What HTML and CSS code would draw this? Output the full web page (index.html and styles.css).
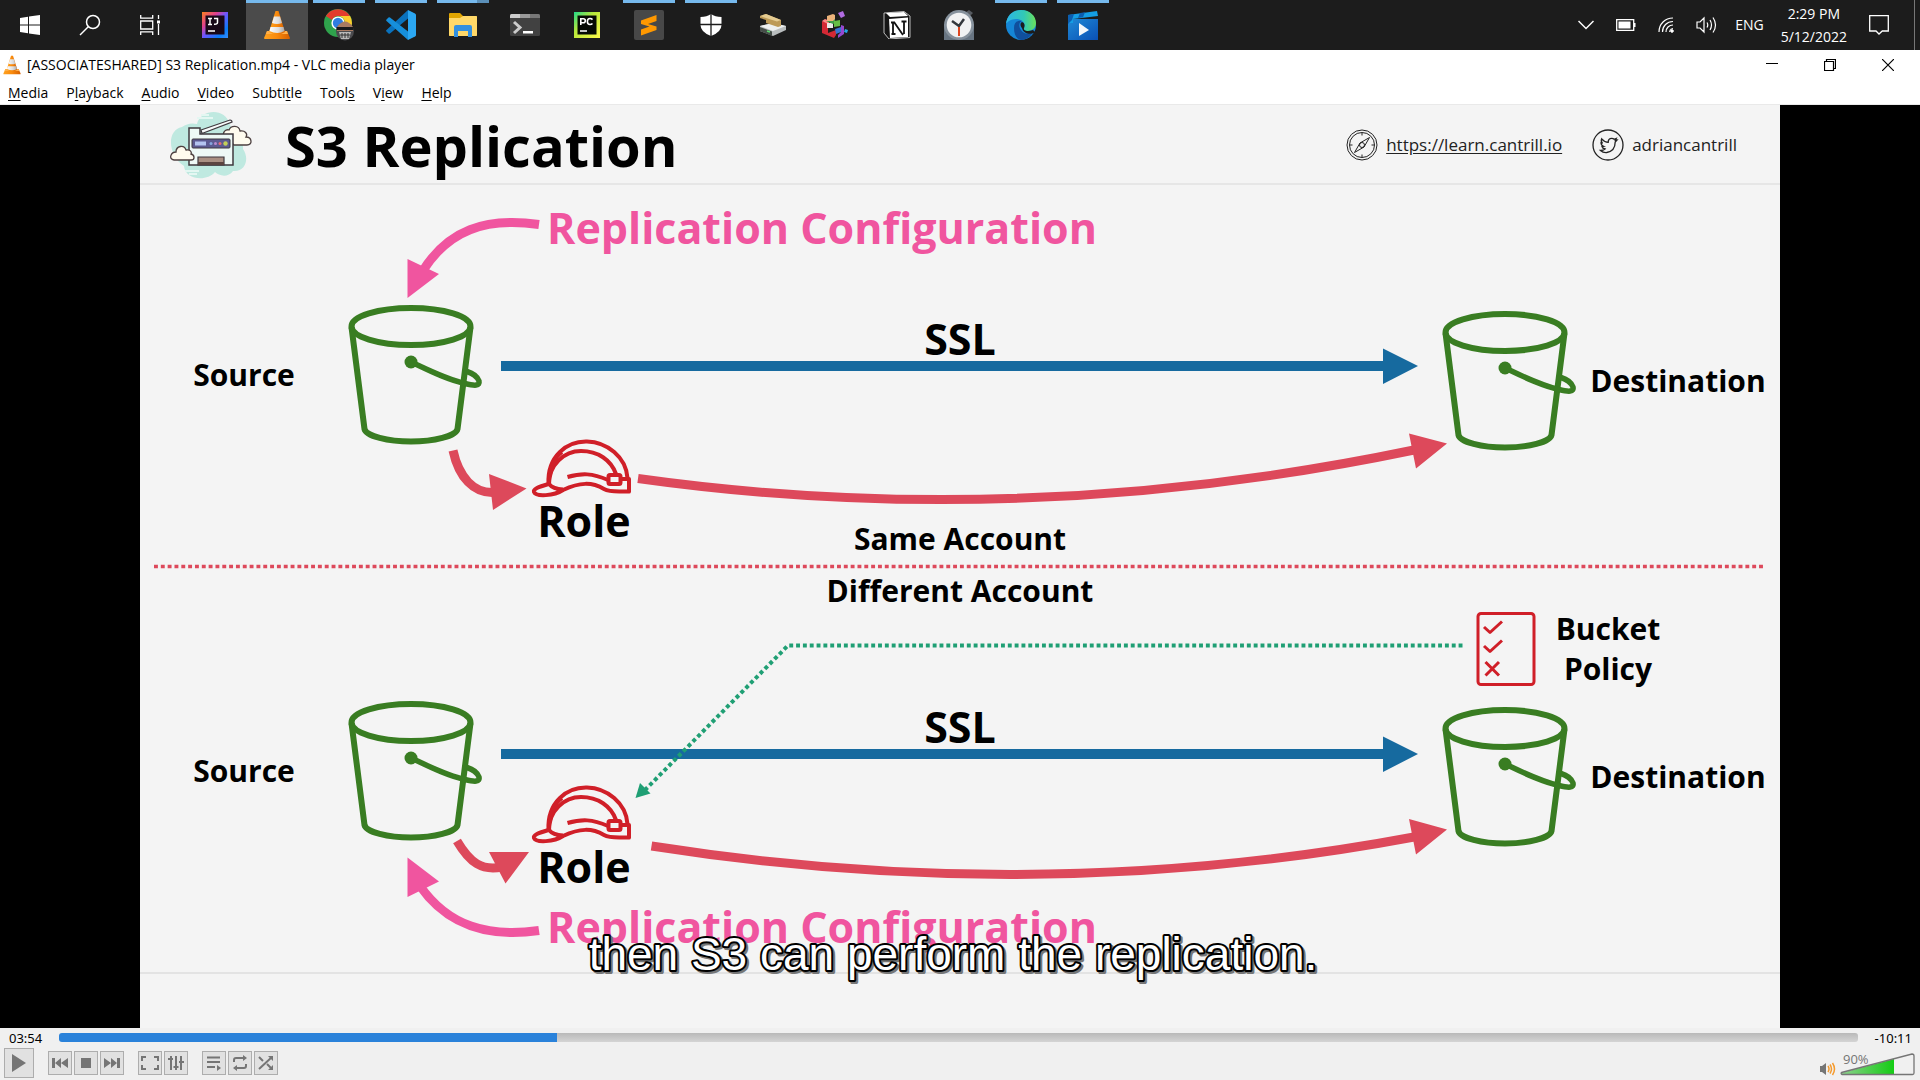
FILE: index.html
```html
<!DOCTYPE html>
<html lang="en">
<head>
<meta charset="utf-8">
<title>[ASSOCIATESHARED] S3 Replication.mp4 - VLC media player</title>
<link rel="stylesheet" href="styles.css">
</head>
<body>
<svg class="defs" aria-hidden="true">
  <defs>
    <linearGradient id="coneFill" x1="0" x2="1"><stop offset="0" stop-color="#ffa21f"/><stop offset=".5" stop-color="#f98a0c"/><stop offset="1" stop-color="#d65f00"/></linearGradient>
    <linearGradient id="coneStripe" x1="0" x2="1"><stop offset="0" stop-color="#fff"/><stop offset=".6" stop-color="#dcdcdc"/><stop offset="1" stop-color="#a9a9a9"/></linearGradient>
    <linearGradient id="ijFill" x1="0" x2="1" y1="0" y2="1"><stop offset="0" stop-color="#fc801d"/><stop offset=".3" stop-color="#e0408f"/><stop offset=".5" stop-color="#6b57ff"/><stop offset=".8" stop-color="#087cfa"/><stop offset="1" stop-color="#3a8df5"/></linearGradient>
    <linearGradient id="pcFill" x1="0" x2="1" y1="0" y2="1"><stop offset="0" stop-color="#21d789"/><stop offset=".4" stop-color="#b8e83a"/><stop offset="1" stop-color="#fcf84a"/></linearGradient>
    <linearGradient id="edgeTop" x1="0" x2="1"><stop offset="0" stop-color="#2bb5e8"/><stop offset=".6" stop-color="#32c9b5"/><stop offset="1" stop-color="#6be05a"/></linearGradient>
    <linearGradient id="movieFill" x1="0" x2="1" y1="0" y2="1"><stop offset="0" stop-color="#1f8ad6"/><stop offset="1" stop-color="#0a4fb4"/></linearGradient>
    <linearGradient id="volFill" x1="0" x2="1"><stop offset="0" stop-color="#8fd08f"/><stop offset="1" stop-color="#14cc14"/></linearGradient>
    <symbol id="cone" viewBox="0 0 26 30">
      <path d="M3 21h20l3 7q0 1-1 1H1q-1 0-1-1z" fill="url(#coneFill)"/>
      <path d="M3 21h20l1 3H2z" fill="#ffb04a"/>
      <path d="M11.500 1h3L21 22q-8 5-16 0z" fill="url(#coneFill)"/>
      <path d="M10 6.500h6l2 6.500q-5 2-10 0zM6.500 17h13l1 4q-7 4-15 0z" fill="url(#coneStripe)"/>
    </symbol>
    <symbol id="bucket" viewBox="345 300 142 150">
      <g fill="none" stroke="#397d22" stroke-width="6" stroke-linejoin="round">
        <ellipse cx="411" cy="326.500" rx="59.500" ry="18.500"/>
        <path d="M351.500 327L364.500 429C366 436 388 441.500 411 441.500S456 436 457.500 429L470.500 327"/>
        <path d="M411 362C430 371 448 380 465 383.500C475 386 480 386 479 381C477 376 472 373 467 371.500" stroke-width="5.500"/>
      </g>
      <circle cx="411" cy="362" r="6.500" fill="#397d22"/>
    </symbol>
    <symbol id="helmet" viewBox="530 436 104 64">
      <g fill="none" stroke="#d01f28" stroke-width="4" stroke-linejoin="round">
        <path d="M548.500 484C547 456 567 441 587 441.500S626 457 627.500 478"/>
        <path d="M549 484C549 465 564 451 581 451S611 460 616 474"/>
        <path d="M549 480C551 464 556 456 562 452"/>
        <path d="M548.500 484C538 487 533 489 534 492C536 497 554 496 563 490C580 482 592 482 604 489C611 493 622 491 629 491.500V479H621M549 484Q553 489 563 489.500"/>
        <path d="M567.500 477C582 473 592 473 608 480"/>
        <rect x="608.500" y="475" width="12" height="9" rx="1.500"/>
      </g>
    </symbol>
  </defs>
</svg>

<header class="taskbar">
  <nav class="system-buttons" aria-label="System">
    <button class="task-button system" aria-label="Start"><svg width="20" height="20" viewBox="0 0 20 20" fill="#fff"><path d="M0 3l8-1.200v7.700H0zM9 1.600L20 0v9.500H9zM0 10.500h8v7.700L0 17zM9 10.500h11V20L9 18.400z"/></svg></button>
    <button class="task-button system" aria-label="Search"><svg width="22" height="22" viewBox="0 0 22 22" fill="none" stroke="#fff" stroke-width="1.500"><circle cx="14" cy="8" r="6.500"/><path d="M9.500 12.500L1 21"/></svg></button>
    <button class="task-button system" aria-label="Task view"><svg width="20" height="20" viewBox="0 0 20 20" fill="none" stroke="#fff" stroke-width="1.300"><path d="M.7 0v3.200h12V0M.7 20v-3.200h12V20M.7 6h12v8H.7zM18.500 0v4M18.500 9v11"/><path d="M17 5.500h3v3h-3z" fill="#fff" stroke="none"/></svg></button>
  </nav>
  <nav class="apps" aria-label="Applications">
    <button class="task-button" aria-label="IntelliJ IDEA"><svg width="26" height="26" viewBox="0 0 26 26"><path d="M0 0h26v26H0z" fill="url(#ijFill)"/><path d="M3.500 3.500h19v19h-19z" fill="#180818"/><path d="M6 6.500h4M8 6.500v6M6 12.500h4M12 6.500h3.500v4q0 2-3.500 1.700M6 19h7" stroke="#fff" stroke-width="1.500" fill="none"/></svg></button>
    <button class="task-button active" aria-label="VLC media player"><svg width="26" height="30"><use href="#cone"/></svg></button>
    <button class="task-button running" aria-label="Google Chrome"><svg width="30" height="32" viewBox="0 0 30 32"><circle cx="14" cy="14" r="14" fill="#2fa24c"/><path d="M1.900 7A14 14 0 0 1 26 7H14a7 7 0 0 0-6 4z" fill="#e33b2e"/><path d="M26.100 7A14 14 0 0 1 14 28l6-10.500A7 7 0 0 0 14 7z" fill="#fccb2b"/><circle cx="14" cy="14" r="6.600" fill="#fff"/><circle cx="14" cy="14" r="5.200" fill="#2f7de1"/><circle cx="21" cy="22.500" r="9" fill="#4b4b4e"/><path d="M13 18q8-11 16 0v4H13z" fill="#a97b62"/><path d="M12.500 18h17v3h-17z" fill="#1a1a1c"/><path d="M15 23h12l-2 7h-8z" fill="#b9b9b9"/><path d="M16 26h10M18 24v5M21 24v5M24 24v5" stroke="#333" fill="none"/></svg></button>
    <button class="task-button running" aria-label="Visual Studio Code"><svg width="30" height="30" viewBox="0 0 30 30"><path d="M22 0l7 3.500q1 .5 1 1.500v20q0 1-1 1.500L22 30z" fill="#2ba7f2"/><path d="M22 0v8.500L4 23.500q-1 .5-1.500 0l-2-2q-.8-.8 0-1.500z" fill="#0a72bd"/><path d="M22 30v-8.500L4 7.500q-1-.5-1.500 0l-2 2q-.8.800 0 1.500z" fill="#168fdb"/></svg></button>
    <button class="task-button running grouped" aria-label="File Explorer"><svg width="28" height="24" viewBox="0 0 28 24"><path d="M0 1q0-1 1-1h10l3 3h13q1 0 1 1v18q0 1-1 1H1q-1 0-1-1z" fill="#e0a500"/><path d="M0 5h11l3-2h13q1 0 1 1v18q0 1-1 1H1q-1 0-1-1z" fill="#ffd869"/><path d="M5 24V14q0-2 2-2h14q2 0 2 2v10h-4v-6H9v6z" fill="#3390df"/></svg></button>
    <button class="task-button" aria-label="Terminal"><svg width="30" height="22" viewBox="0 0 30 22"><rect width="30" height="22" rx="1.500" fill="#414141"/><path d="M0 4V1.500Q0 0 1.500 0H10v4z" fill="#ccc"/><path d="M10 0h10v4H10z" fill="#999"/><path d="M20 0h8.500Q30 0 30 1.500V4H20z" fill="#777"/><path d="M4 8l6 5.500L4 19" stroke="#ccc" stroke-width="3" fill="none"/><path d="M13 17h10v2.500H13z" fill="#fff"/></svg></button>
    <button class="task-button" aria-label="PyCharm"><svg width="26" height="26" viewBox="0 0 26 26"><path d="M0 0h26v26H0z" fill="url(#pcFill)"/><path d="M3.500 3.500h19v19h-19z" fill="#050a04"/><path d="M6.800 13V6.700h2.500q2 0 2 2t-2 2H7M18.500 7.600q-1-1.100-2.500-1.100-2.600 0-2.600 3t2.600 3q1.500 0 2.500-1M6 19h7" stroke="#fff" stroke-width="1.600" fill="none"/></svg></button>
    <button class="task-button running" aria-label="Sublime Text"><svg width="30" height="30" viewBox="0 0 30 30"><rect width="30" height="30" rx="2" fill="#484848"/><path d="M7 10.500L22.500 5v6L14 14l8.500 2.500V20L7 25.500v-6l8.500-3L7 14z" fill="#ff9800"/></svg></button>
    <button class="task-button running" aria-label="Windows Security"><svg width="22" height="22" viewBox="0 0 22 22"><path d="M11 0q4 3 10.500 3v8q0 7-10.500 11Q.5 18 .5 11V3Q7 3 11 0z" fill="#fff"/><path d="M11 0v22M0 10.500h22" stroke="#1c1c1c" stroke-width="1.300"/></svg></button>
    <button class="task-button" aria-label="Compression utility"><svg width="28" height="22" viewBox="0 0 28 22"><path d="M1 12l13-3 13 3v4l-13 6-13-5z" fill="#b9bdbe"/><path d="M1 12l13-3 13 3-13 5z" fill="#eef0f0"/><path d="M1 13l12 4.500V22L1 17z" fill="#454d48"/><path d="M8 17l3 1" stroke="#5fdc72" stroke-width="1.500"/><path d="M1 2l6-2 15 6v6l-3 1-12-4V6L1 4z" fill="#bd9a57"/><path d="M1 2l6-2 15 6-4 1.500z" fill="#e4cb91"/></svg></button>
    <button class="task-button" aria-label="Registry tool"><svg width="28" height="28" viewBox="0 0 28 28"><path d="M1 10l6 2v10l8-3v5l-2 3L1 22z" fill="#d32935"/><path d="M1 10l3-2 5 2-2 3z" fill="#ff8585"/><path d="M6 5l6-2 2 1v6H6z" fill="#edb37a"/><path d="M6 12h6v5H6z" fill="#e9e9e9"/><path d="M5 10h7l2-2v4l-2 1z" fill="#3f9f48"/><path d="M13 10l6-1v6l-6 1z" fill="#66bd46"/><path d="M17 2l5-2 2 5-4 2z" fill="#b16be2"/><path d="M14 18l6-2v5l-5 2z" fill="#3775d4"/><path d="M20 14l3 1v8l-6 4v-3l3-3z" fill="#9548cf"/><path d="M24 18l3 1-1 3-3-1z" fill="#25a5e8"/></svg></button>
    <button class="task-button" aria-label="Notion"><svg width="28" height="28" viewBox="0 0 28 28"><path d="M1 2l20-1.500L27 5v21.500L6 28l-5-6z" fill="#151515" stroke="#bcbcbc"/><path d="M3 2l18-1 4 4L7 6z" fill="#fff"/><path d="M6 8l19-1.500V26L7 27z" fill="#fff"/><path d="M10 12v11M21 10v13M11 11l9 13M8 11.500h4M18.500 10.500h5M8.500 23h4" stroke="#111" stroke-width="1.800" fill="none"/></svg></button>
    <button class="task-button" aria-label="Alarms and clock"><svg width="30" height="30" viewBox="0 0 30 30"><path d="M0 14h30v16H0z" fill="#687582"/><path d="M22 2l3-2 4 3-3 3z" fill="#565a60"/><circle cx="15" cy="15" r="15" fill="#87929d"/><circle cx="15" cy="15" r="12.300" fill="#f1f2f3"/><path d="M8 11l7 5 5-7" stroke="#34383d" stroke-width="2.500" fill="none"/><path d="M15 17v9" stroke="#df461f" stroke-width="2"/></svg></button>
    <button class="task-button running" aria-label="Microsoft Edge"><svg width="30" height="30" viewBox="0 0 30 30"><circle cx="15" cy="15" r="15" fill="#1586d6"/><path d="M0 14C1 5 7 0 15 0c9 0 15 6 15 13 0 6-5 8-9 8-3 0-4-1-3-3 2-5-2-9-8-9C5 9 1 12 0 14z" fill="url(#edgeTop)"/><path d="M8 18c0-6 4-8 8-7-4 2-3 6-1 9 3 5 9 4 12 2-3 6-8 8-12 8-5-1-7-6-7-12z" fill="#104f9d"/><path d="M16 12c3 1 3 4 2 6-1 3 4 4 9 2l3 3h-2c-5 2-11 0-12-5-2-2-2-5 0-6z" fill="#1c1c1c"/></svg></button>
    <button class="task-button running" aria-label="Movies and TV"><svg width="30" height="30" viewBox="0 0 30 30"><path d="M0 9h30v21H0z" fill="url(#movieFill)"/><path d="M0 5l29-4 1 5L5 9v4H0z" fill="#149ee4"/><path d="M0 5l6-1-2 6-4 4zM12 3l5-.7-2 5-5 .7z" fill="#0b5eb0"/><path d="M11 13l10 7-10 6z" fill="#f4f7fa"/></svg></button>
  </nav>
  <div class="tray">
    <button class="tray-button" aria-label="Show hidden icons"><svg width="16" height="10" viewBox="0 0 16 10" fill="none" stroke="#fff" stroke-width="1.500"><path d="M.5 1L8 8.500 15.500 1"/></svg></button>
    <button class="tray-button" aria-label="Battery"><svg width="20" height="12" viewBox="0 0 20 12"><path d="M.7.7h17v10.600H.7z" fill="none" stroke="#fff" stroke-width="1.300"/><path d="M2.500 2.500h12v7h-12zM18 4h1.500v4H18z" fill="#fff"/></svg></button>
    <button class="tray-button" aria-label="Wireless network"><svg width="16" height="16" viewBox="0 0 16 16" fill="none" stroke="#fff"><path d="M1 15C1 7 7 1 15 1M4.500 15C4.500 9 9 4.500 15 4.500M8 15c0-4 3-7 7-7" stroke-width="1.200"/><path d="M11.500 15q0-3.500 3.500-3.500" /><circle cx="14" cy="14" r="1.300" fill="#fff"/></svg></button>
    <button class="tray-button" aria-label="Volume"><svg width="22" height="18" viewBox="0 0 22 18" fill="none" stroke="#fff" stroke-width="1.200"><path d="M1 6h3l4-4v14l-4-4H1zM11 6.500q1.500 2.500 0 5M14 4q3 5 0 10M17 1.500q5 7.500 0 15"/></svg></button>
    <button class="tray-button language" aria-label="Input language">ENG</button>
    <button class="tray-button clock"><time>2:29 PM</time><time>5/12/2022</time></button>
    <button class="tray-button" aria-label="Notifications"><svg width="20" height="20" viewBox="0 0 20 20" fill="none" stroke="#fff" stroke-width="1.300"><path d="M.7.700h18.600v15.300h-6L10 19l-3-3H.7z"/></svg></button>
    <button class="show-desktop" aria-label="Show desktop"></button>
  </div>
</header>

<div class="titlebar">
  <svg class="title-icon" width="18" height="20"><use href="#cone"/></svg>
  <h1 class="window-title">[ASSOCIATESHARED] S3 Replication.mp4 - VLC media player</h1>
  <div class="window-controls">
    <button aria-label="Minimize"><svg width="12" height="12" viewBox="0 0 12 12" stroke="#000"><path d="M0 4.500h12"/></svg></button>
    <button aria-label="Restore"><svg width="12" height="12" viewBox="0 0 12 12" fill="none" stroke="#000" stroke-width="1.200"><path d="M.5 2.500h9v9h-9zM2.500 2V.500h9v9H10"/></svg></button>
    <button aria-label="Close"><svg width="12" height="12" viewBox="0 0 12 12" stroke="#000" stroke-width="1.200"><path d="M0 0l12 12M12 0L0 12"/></svg></button>
  </div>
</div>
<nav class="menubar" aria-label="Menu">
  <button><u>M</u>edia</button>
  <button>P<u>l</u>ayback</button>
  <button><u>A</u>udio</button>
  <button><u>V</u>ideo</button>
  <button>Subti<u>t</u>le</button>
  <button>Tool<u>s</u></button>
  <button>V<u>i</u>ew</button>
  <button><u>H</u>elp</button>
</nav>

<main class="stage">
  <article class="slide">
    <header class="slide-header">
      <svg class="printer" width="82" height="70" viewBox="0 0 82 70">
        <path d="M27 14C30 0 55-4 60 15c4 8 14 12 13 24 6 8 4 23-10 22-5 7-14 5-18 1-8 10-30 8-31-6C-2 46-4 20 12 17q7-5 15-3z" fill="#bfe9e0"/>
        <path d="M27 8h16M31 5h8M15 61h14M19 64h8" stroke="#e4f7f2" stroke-width="2"/>
        <path d="M54 26c-2-4 2-7 5-6 2-5 10-5 11 1 5-1 8 3 6 6 6 0 7 8 1 8H64z" fill="#fffbee" stroke="#4d4040" stroke-width="1.300"/>
        <path d="M19 18h11v6h33v31H19z" fill="#eef9f6" stroke="#3f393e" stroke-width="1.500"/>
        <path d="M31 20l29-10q2 0 2 2L32 23.500z" fill="#f7fbfa" stroke="#3f393e" stroke-width="1.200"/>
        <rect x="22" y="29" width="38" height="9" rx="1" fill="#5c5a91" stroke="#3f393e"/>
        <path d="M25 33.500h11" stroke="#b4c4f0" stroke-width="4"/>
        <circle cx="41" cy="33.500" r="1.500" fill="#86a6df"/><circle cx="45.500" cy="33.500" r="1.500" fill="#b98bd0"/><circle cx="50" cy="33.500" r="1.500" fill="#e56b79"/><circle cx="55.500" cy="33.500" r="2.200" fill="#c3cf57"/>
        <path d="M28 47h26v8H28z" fill="#a98f82" stroke="#3f393e" stroke-width="1.200"/><path d="M28 52h26v3H28z" fill="#5b4440"/>
        <path d="M4 50C-2 49 1 42 6 42c0-6 8-8 10-2 4-1 6 2 5 4 4 1 4 6 0 6z" fill="#fffbee" stroke="#4d4040" stroke-width="1.300"/>
      </svg>
      <h2 class="slide-title">S3 Replication</h2>
      <div class="slide-links">
        <a class="site" href="https://learn.cantrill.io"><svg width="32" height="32" viewBox="0 0 32 32" fill="none" stroke="#222"><circle cx="16" cy="16" r="15"/><circle cx="16" cy="16" r="12.500"/><circle cx="16" cy="16" r="2.500"/><path d="M23.500 8.500L18 18l-9.500 5.500L14 14zM16 4v2.500M16 25.500V28M4 16h2.500M25.500 16H28"/></svg><span>https://learn.cantrill.io</span></a>
        <a class="handle" href="#adriancantrill"><svg width="32" height="32" viewBox="0 0 32 32" fill="none" stroke="#222" stroke-width="1.300"><circle cx="16" cy="16" r="15"/><path d="M8.500 21.500q3 0 4.500-1.500-2.500-.5-3-2.500l1.500-.2q-2.500-1-2.500-3.500l1.500.5q-2-2-.8-4.500 3 3.500 6.500 3.500 0-4 3.500-4 1.500 0 2.500 1l2-.8-.8 1.700 1.600-.2-1.800 2q0 9-8.500 10.500-3.700.3-6.200-2z"/></svg><span>adriancantrill</span></a>
      </div>
    </header>
    <svg class="diagram" viewBox="140 185 1640 843" role="img" aria-label="Replication between source and destination buckets">
      <g fill="none" stroke="#f0559f" stroke-width="9">
        <path d="M539 224.500C485 217 448 230 422 272"/>
        <path d="M539 930.500C488 938 448 926 420 886"/>
      </g>
      <path d="M407.500 259V298L439 274zM407.500 857.500V897L439 881.500z" fill="#f0559f"/>
      <g fill="none" stroke="#dd495b" stroke-width="9">
        <path d="M453 450.500C459 478 474 493 493 492.500"/>
        <path d="M638 478.500Q1020 532 1414 450"/>
        <path d="M457 841C470 863 482 871 502 867"/>
        <path d="M651.500 846Q1040 907 1414 837"/>
      </g>
      <path d="M489 474L526.500 488.500 493 510zM1409 433.500L1447 443.500 1416 468.500zM489 852H529L505.500 883.500zM1409 819L1447 829.500 1416 854.500z" fill="#dd495b"/>
      <path d="M501 361H1383V348.500L1418 366 1383 384V371H501zM501 749H1383V736.500L1418 754 1383 772V759H501z" fill="#166a9f"/>
      <path d="M154 566.500H1764" stroke="#dd495b" stroke-width="3.500" stroke-dasharray="3.900 2.930"/>
      <path d="M1462.500 645.500H788L645 790" fill="none" stroke="#1f9f74" stroke-width="4" stroke-dasharray="3.900 2.930"/>
      <path d="M635.500 798L640 783 650.500 793.500z" fill="#1f9f74"/>
      <use href="#bucket" x="345" y="300" width="142" height="150"/>
      <use href="#bucket" x="1439" y="306" width="142" height="150"/>
      <use href="#bucket" x="345" y="696" width="142" height="150"/>
      <use href="#bucket" x="1439" y="702" width="142" height="150"/>
      <use href="#helmet" x="530" y="436" width="104" height="64"/>
      <use href="#helmet" x="530" y="782" width="104" height="64"/>
      <g fill="none" stroke="#d01f28" stroke-width="3" stroke-linejoin="round">
        <rect x="1478" y="613.500" width="56" height="71" rx="3"/>
        <path d="M1484 627L1490 632.500 1502 621.500M1484 646L1490 651.500 1502 640.500M1485.500 662L1499 675.500M1499 662L1485.500 675.500"/>
      </g>
      <g class="label large">
        <text class="pink" x="822" y="244">Replication Configuration</text>
        <text class="pink" x="822" y="943">Replication Configuration</text>
        <text x="960" y="355">SSL</text>
        <text x="960" y="743">SSL</text>
        <text x="584" y="537">Role</text>
        <text x="584" y="883">Role</text>
      </g>
      <g class="label">
        <text x="244" y="386">Source</text>
        <text x="1678" y="392">Destination</text>
        <text x="960" y="550">Same Account</text>
        <text x="960" y="602">Different Account</text>
        <text x="1608" y="640">Bucket</text>
        <text x="1608" y="680">Policy</text>
        <text x="244" y="782">Source</text>
        <text x="1678" y="788">Destination</text>
      </g>
      <path d="M140 973H1780" stroke="#e3e3e3" stroke-width="2"/>
      <g class="subtitle">
        <text class="subtitle-shadow" x="955" y="972">then S3 can perform the replication.</text>
        <text x="953" y="970">then S3 can perform the replication.</text>
      </g>
    </svg>
  </article>
</main>

<footer class="controls">
  <div class="seek-row">
    <time>03:54</time>
    <input class="seek" type="range" min="0" max="845" value="234" aria-label="Position">
    <time>-10:11</time>
  </div>
  <div class="button-row">
    <button class="control play" aria-label="Play"><svg width="16" height="18" viewBox="0 0 16 18"><path d="M1 0l14 9L1 18z"/></svg></button>
    <div class="control-group">
      <button class="control" aria-label="Previous"><svg width="16" height="12" viewBox="0 0 16 12"><path d="M0 1h3v10H0zM9 1v10L3 6zM16 1v10l-7-5z"/></svg></button>
      <button class="control" aria-label="Stop"><svg width="10" height="10" viewBox="0 0 10 10"><path d="M0 0h10v10H0z"/></svg></button>
      <button class="control" aria-label="Next"><svg width="16" height="12" viewBox="0 0 16 12"><path d="M16 1h-3v10h3zM7 1v10l6-5zM0 1v10l7-5z"/></svg></button>
    </div>
    <div class="control-group">
      <button class="control" aria-label="Fullscreen"><svg width="18" height="14" viewBox="0 0 18 14"><path d="M1 5V1h4M13 1h4v4M1 9v4h4M13 13h4V9" fill="none" stroke="#757575" stroke-width="2"/></svg></button>
      <button class="control" aria-label="Extended settings"><svg width="16" height="14" viewBox="0 0 16 14"><path d="M3 0v14M8 0v14M13 0v14M0 3h5M5.500 11h5M11 6h5" fill="none" stroke="#757575" stroke-width="2"/></svg></button>
    </div>
    <div class="control-group">
      <button class="control" aria-label="Playlist"><svg width="16" height="15" viewBox="0 0 16 15"><path d="M1 1.500h13M1 6h13M1 11h8" stroke="#757575" stroke-width="2"/><path d="M11 9l4 3-4 3z"/></svg></button>
      <button class="control" aria-label="Loop"><svg width="16" height="16" viewBox="0 0 16 16"><path d="M2 7V5q0-2 2-2h8M14 9v2q0 2-2 2H4" fill="none" stroke="#757575" stroke-width="2"/><path d="M11 0l4 3-4 3zM5 10l-4 3 4 3z"/></svg></button>
      <button class="control" aria-label="Random"><svg width="16" height="14" viewBox="0 0 16 14"><path d="M1 13L14 1M1 1l4 4M9 8l4 4" fill="none" stroke="#757575" stroke-width="2"/><path d="M10 0h5v5zM15 9v5h-5z"/></svg></button>
    </div>
    <div class="volume">
      <button class="mute" aria-label="Mute"><svg width="16" height="14" viewBox="0 0 16 14"><path d="M0 4h2l4-3v12l-4-3H0z" fill="#757575"/><path d="M8 4q2 3 0 6M10 2.500q3 4.500 0 9M12.500 1q4 6 0 12" fill="none" stroke="#f59a2c" stroke-width="1.500"/></svg></button>
      <label class="volume-slider">
        <span>90%</span>
        <svg width="76" height="24" viewBox="0 0 76 24"><path d="M1 21L54 7v16H2z" fill="url(#volFill)"/><path d="M1.500 20.500L72 2q2 0 2 2v17q0 1.500-1.500 1.500H2q-1.500-1-.5-2z" fill="none" stroke="#757575" stroke-width="1.300"/></svg>
        <input type="range" min="0" max="125" value="90">
      </label>
    </div>
  </div>
</footer>
</body>
</html>
```
FILE: styles.css
```css
* { box-sizing: border-box; }

body {
  margin: 0;
  height: 100vh;
  display: flex;
  flex-direction: column;
  background: #fff;
  color: #000;
  font-family: "Open Sans", "Noto Sans", sans-serif;
  font-size: 14px;
  line-height: 20px;
  overflow: hidden;
}

button {
  display: flex;
  align-items: center;
  justify-content: center;
  margin: 0;
  padding: 0;
  border: 0;
  background: none;
  color: inherit;
  font: inherit;
}

svg { display: block; flex: none; }

.defs { position: absolute; width: 0; height: 0; }

/* Taskbar */
.taskbar {
  display: flex;
  height: 50px;
  flex: none;
  background: #1c1c1c;
  color: #fff;
}
.system-buttons, .apps { display: flex; }
.apps { margin-left: 4px; }
.task-button {
  width: 62px;
  height: 50px;
  background: linear-gradient(#76b9ed, #76b9ed) center top / 0 3px no-repeat;
}
.task-button.system { width: 60px; }
.task-button.running { background-size: 52px 3px; }
.task-button.active { background-color: #4b4b4b; background-size: 100% 3px; }
.task-button.grouped {
  background-image: linear-gradient(90deg, #76b9ed 40px, #5b8fb8 40px);
}
.tray { display: flex; align-items: center; gap: 22px; margin-left: auto; }
.language, .clock { margin-left: -5px; }
.clock { flex-direction: column; line-height: 23px; }
.show-desktop { width: 6px; height: 50px; margin-left: 3px; border-left: 1px solid #777; }

/* Window frame */
.titlebar { display: flex; align-items: center; height: 30px; flex: none; padding-left: 3px; }
.window-title { margin: 0 0 0 6px; font-size: 14px; font-weight: 400; }
.window-controls { display: flex; margin-left: auto; padding-right: 3px; }
.window-controls button { width: 58px; height: 30px; }
.menubar {
  display: flex;
  gap: 18px;
  height: 25px;
  flex: none;
  padding: 1px 8px 0;
  border-bottom: 1px solid #e9e9e9;
}
.menubar u { text-underline-offset: 2px; }

/* Video */
.stage {
  flex: 1;
  min-height: 0;
  display: flex;
  justify-content: center;
  background: #000;
}
.slide {
  display: flex;
  flex-direction: column;
  height: 100%;
  aspect-ratio: 1640 / 923;
  background: #f4f4f4;
}
.slide-header {
  display: flex;
  align-items: center;
  flex: none;
  height: 80px;
  padding: 1px 43px 0 30px;
  border-bottom: 2px solid #e6e6e6;
}
.slide-title { margin: 0 0 0 33px; font-size: 56px; line-height: 76px; }
.slide-links { display: flex; gap: 30px; margin-left: auto; font-size: 17px; }
.slide-links a { display: flex; align-items: center; gap: 8px; color: #222; text-decoration: none; }
.slide-links .site span { text-decoration: underline; text-underline-offset: 2px; }
.diagram { flex: 1; min-height: 0; width: 100%; }
.label { font-size: 30px; font-weight: 700; text-anchor: middle; }
.large { font-size: 43px; }
.pink { fill: #f0559f; }
.subtitle {
  font-family: "Liberation Sans", Arial, sans-serif;
  font-size: 46px;
  text-anchor: middle;
  fill: #fff;
  stroke: #000;
  stroke-width: 4px;
  stroke-linejoin: round;
  paint-order: stroke;
}
.subtitle-shadow { fill: #777; stroke: #777; }

/* Playback controls */
.controls { flex: none; height: 52px; background: #f0f0f0; }
.seek-row {
  display: flex;
  align-items: center;
  gap: 17px;
  height: 19px;
  padding: 0 8px 0 9px;
  font-family: "Noto Sans", sans-serif;
  font-size: 13px;
}
.seek {
  flex: 1;
  height: 9px;
  margin: 0;
  appearance: none;
  border-radius: 3px;
  background: linear-gradient(90deg, #2a82da 27.700%, transparent 27.700%), linear-gradient(#b9b9b9, #d4d4d4);
}
.seek::-webkit-slider-thumb { appearance: none; width: 1px; height: 1px; }
.button-row { display: flex; align-items: center; gap: 14px; height: 32px; padding: 0 4px; }
.control-group { display: flex; gap: 2px; }
.control { width: 24px; height: 24px; border: 1px solid #adadad; background: #e1e1e1; fill: #757575; }
.play { width: 30px; height: 30px; }
.volume { display: flex; align-items: flex-end; gap: 4px; margin-left: auto; padding-top: 2px; }
.volume-slider { position: relative; color: #757575; font-size: 13px; }
.volume-slider span { position: absolute; left: 3px; top: -3px; }
.volume-slider input { position: absolute; inset: 0; width: 100%; margin: 0; opacity: 0; }
```
